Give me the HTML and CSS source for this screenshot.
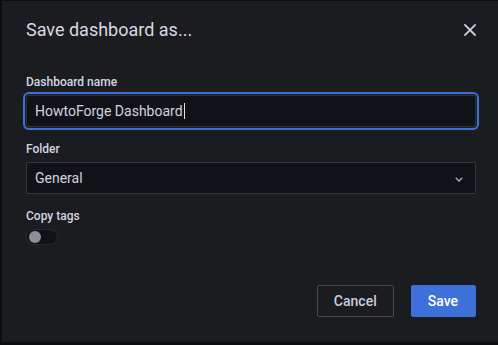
FILE: index.html
```html
<!DOCTYPE html>
<html>
<head>
<meta charset="utf-8">
<link rel="stylesheet" href="styles.css">
</head>
<body>
<div class="modal">
  <div class="header">
    <h1 class="title">Save dashboard as...</h1>
    <svg class="close" width="12" height="12" viewBox="0 0 12 12"><path d="M1 1L11 11M11 1L1 11" stroke="#ccccdc" stroke-width="1.8" stroke-linecap="square"/></svg>
  </div>
  <div class="body">
    <div class="field">
      <div class="label">Dashboard name</div>
      <div class="input focused"><span class="value">HowtoForge Dashboard</span><span class="caret"></span></div>
    </div>
    <div class="field">
      <div class="label">Folder</div>
      <div class="input select"><span class="value">General</span>
        <svg class="chev" width="8" height="5" viewBox="0 0 8 5"><path d="M0.8 0.8L4 4L7.2 0.8" stroke="#9fa1a8" stroke-width="1.6" fill="none"/></svg>
      </div>
    </div>
    <div class="field">
      <div class="label">Copy tags</div>
      <div class="toggle"><span class="knob"></span></div>
    </div>
    <div class="actions">
      <button class="btn cancel">Cancel</button>
      <button class="btn save">Save</button>
    </div>
  </div>
</div>
</body>
</html>
```
FILE: styles.css
```css
html, body {
  margin: 0;
  padding: 0;
  background: #0c0d10;
  width: 498px;
  height: 345px;
  overflow: hidden;
  font-family: Roboto, "Liberation Sans", sans-serif;
  color: #ccccdc;
}
.modal {
  margin: 1px 0 0 2px;
  width: 496px;
  height: 341px;
  background: #1a1c20;
  box-sizing: border-box;
  padding: 0 22px 0 24px;
}
.header {
  display: flex;
  align-items: center;
  justify-content: space-between;
  padding-top: 17px;
  height: 24px;
}
.title {
  margin: 0;
  font-size: 18px;
  line-height: 24px;
  font-weight: 400;
  color: #d8d9e2;
}
.close {
  display: block;
}
.body {
  padding-top: 32px;
}
.field {
  margin-bottom: 14px;
}
.label {
  font-size: 12px;
  line-height: 16px;
  font-weight: 500;
  color: #d4d4e0;
  margin-bottom: 5px;
}
.input {
  height: 32px;
  box-sizing: border-box;
  background: #111217;
  border: 1px solid rgba(204, 204, 220, 0.2);
  border-radius: 2px;
  display: flex;
  align-items: center;
  padding: 0 8px;
  font-size: 14px;
}
.input.focused {
  border-color: #2e3036;
  box-shadow: 0 0 0 1px #1a1c20, 0 0 0 3px #3d71d9;
  border-radius: 3px;
}
.value {
  color: #d2d3de;
}
.caret {
  display: inline-block;
  width: 1px;
  height: 16px;
  background: #e0e0ea;
  margin-left: 1px;
}
.select {
  justify-content: space-between;
  padding-right: 12px;
}
.chev {
  display: block;
  margin-top: 2px;
}
.toggle {
  width: 32px;
  height: 16px;
  box-sizing: border-box;
  border: 1px solid rgba(204, 204, 220, 0.12);
  background: #111217;
  border-radius: 8px;
  display: flex;
  align-items: center;
  padding-left: 2px;
}
.knob {
  width: 12px;
  height: 12px;
  border-radius: 50%;
  background: #8d8f98;
}
.actions {
  display: flex;
  justify-content: flex-end;
  gap: 17px;
  margin-top: 40px;
}
.btn {
  height: 32px;
  box-sizing: border-box;
  font-family: Roboto, "Liberation Sans", sans-serif;
  font-size: 14px;
  font-weight: 500;
  border-radius: 2px;
  padding: 0 16px;
  cursor: pointer;
}
.cancel {
  background: transparent;
  border: 1px solid rgba(204, 204, 220, 0.25);
  color: #ccccdc;
}
.save {
  background: #3d71d9;
  border: 1px solid #3d71d9;
  color: #ffffff;
  padding: 0 17px 0 16px;
}
```
